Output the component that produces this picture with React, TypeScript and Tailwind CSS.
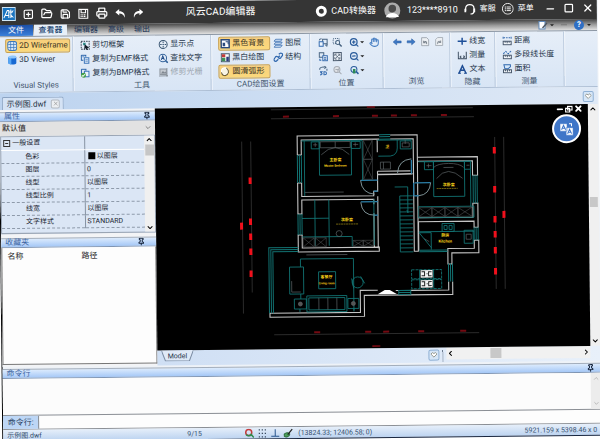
import React from 'react';
import {
  ChevronDown,
  ChevronLeft,
  ChevronRight,
  ChevronUp,
  FolderOpen,
  Hand,
  Minus,
  Pin,
  Printer,
  Save,
  Square,
  SquarePlus,
  X,
  ZoomIn,
  ZoomOut,
} from 'lucide-react';

type IconProps = { children: React.ReactNode; className?: string };

const Icon: React.FC<IconProps> = ({ children, className = 'w-[10px] h-[10px]' }) => (
  <svg viewBox="0 0 20 20" fill="none" strokeWidth="2" className={`${className} shrink-0`} aria-hidden="true">
    {children}
  </svg>
);

const blue = '#2560a8';

const icons = {
  wireframe: (
    <Icon>
      <rect x="1" y="1" width="18" height="18" rx="5" fill="#dbe9f7" stroke="#3b78bd" />
      <path d="M7 2v16M13 2v16M2 7h16M2 13h16" stroke="#3b78bd" strokeWidth="1.5" />
    </Icon>
  ),
  viewer: (
    <Icon>
      <path d="M2 4v12c0 4 16 4 16 0V4z" fill="#1769d2" />
      <path d="M2 4v12c0 2 3 3 6 3V4z" fill="#55a5f4" />
      <ellipse cx="10" cy="4" rx="8" ry="3" fill="#8ec6fb" />
    </Icon>
  ),
  cutFrame: (
    <Icon>
      <rect x="2" y="2" width="16" height="16" stroke="#23303c" strokeDasharray="3 2" />
      <path d="M6 5h5v5H6z" fill="#2b8a86" />
      <path d="M9 8l9 7-4 1 2 4-3-1-2-3-3 2z" fill="#111c26" />
    </Icon>
  ),
  copyEmf: (
    <Icon>
      <path d="M2 2h9v3M2 2v10h4" stroke={blue} />
      <path d="M8 7h9v11H8z" fill="#e9f2fc" stroke="#3c75b9" />
      <path d="M10 11h5M10 14h5M4 5h4" stroke="#3c75b9" strokeWidth="1.5" />
    </Icon>
  ),
  copyBmp: (
    <Icon>
      <path d="M2 2h9v3M2 2v10h4" stroke={blue} />
      <path d="M8 6h9v11H8z" fill="#e9f2fc" stroke="#3c75b9" />
      <circle cx="6" cy="14" r="5" fill="#43a047" />
      <path d="M3 14l2 2 4-4" stroke="#fff" />
    </Icon>
  ),
  showPoint: (
    <Icon>
      <circle cx="10" cy="10" r="8" stroke="#36536f" />
      <path d="M10 4v3M10 13v3M4 10h3M13 10h3" stroke="#36536f" />
      <circle cx="10" cy="10" r="1.5" fill="#36536f" />
    </Icon>
  ),
  findText: (
    <Icon>
      <circle cx="9" cy="9" r="7.5" stroke="#36659c" />
      <path d="M14 14l5 5" stroke="#36659c" strokeWidth="3" />
      <path d="M6 13l3-8 3 8M7 10h4" stroke="#1d4a86" />
    </Icon>
  ),
  trimRaster: (
    <Icon>
      <rect x="3" y="3" width="13" height="11" fill="#c3c9d0" stroke="#8e969f" />
      <path d="M5 12l4-5 3 3 2-2 2 4z" fill="#7f8790" />
      <path d="M1 17h18M17 1v18" stroke="#8e969f" />
    </Icon>
  ),
  blackBg: (
    <Icon>
      <rect x="2" y="2" width="16" height="16" fill="#fff" stroke="#2a4a7d" strokeWidth="3" />
      <path d="M5 15V8h5v7z" fill="#2a4a7d" />
      <path d="M11 6h5v5" stroke="#2a4a7d" />
    </Icon>
  ),
  monochrome: (
    <Icon>
      <rect x="2" y="2" width="16" height="16" fill="#fff" stroke="#45576c" />
      <path d="M3 3h7v6H3z" fill="#c23a3a" />
      <path d="M3 10h7v7H3z" fill="#3f8f58" />
      <path d="M12 8h5v9h-5z" fill="#2d3a7c" />
    </Icon>
  ),
  smoothArc: (
    <Icon>
      <circle cx="9" cy="9" r="7" fill="#f8f4e2" stroke="#fff" />
      <path d="M12 2c7 6 5 13-3 16M2 11c1 5 4 7 8 7" stroke="#6c5b31" />
    </Icon>
  ),
  layers: (
    <Icon>
      <path d="M5 2h13l-3 4H2zM5 8h13l-3 4H2zM5 14h13l-3 4H2z" fill="#e4effb" stroke="#2f67ad" strokeWidth="1.6" />
    </Icon>
  ),
  structure: (
    <Icon>
      <path d="M9 11l4-4M11 4l3-2c3-1 6 2 4 5l-3 4c-2 2-4 1-5 0M9 9c-2-1-4-1-5 1l-2 3c-2 3 1 6 4 5l4-4" stroke="#2f67ad" strokeWidth="2.5" />
    </Icon>
  ),
  pageRefresh: (
    <Icon>
      <path d="M9 3h9v9h-9z" fill="#dfeaf7" stroke="#46627f" />
      <path d="M2 8h8v9H2z" fill="#eef5fd" stroke="#2f67ad" />
      <path d="M2 5c1-3 3-3 5-3M14 15l4-1-1 4" stroke="#46627f" />
    </Icon>
  ),
  zoomWindow: (
    <Icon>
      <rect x="2" y="2" width="12" height="10" stroke="#46627f" strokeDasharray="2 2" />
      <circle cx="11" cy="10" r="4" fill="#e7f0fa" stroke="#46627f" />
      <path d="M14 13l5 5" stroke="#46627f" strokeWidth="3" />
    </Icon>
  ),
  copyView: (
    <Icon>
      <path d="M2 2h9v9H2z" fill="#dbe8f6" stroke="#46627f" />
      <path d="M9 8h9v10H9z" fill="#fff" stroke="#2f67ad" />
      <path d="M11 12h5M11 15h5M3 14v3h3" stroke="#2f67ad" />
    </Icon>
  ),
  fitView: (
    <Icon>
      <rect x="2" y="2" width="16" height="16" fill="#f3f8fd" stroke="#46566a" />
      <path d="M5 9V5h4M15 9V5h-4M5 11v4h4M15 11v4h-4M6 6l8 8M14 6l-8 8" stroke="#46566a" strokeWidth="1.5" />
    </Icon>
  ),
  rotate3d: (
    <Icon>
      <path d="M3 8c-2-5 6-6 9-5M12 1l3 2-3 3M17 6v4" stroke="#46627f" />
      <path d="M3 12h4l-2 2c4 1 2 5-2 4M11 12v6h2c4 0 4-6 0-6z" stroke="#2f67ad" />
    </Icon>
  ),
  zoomPrev: (
    <Icon>
      <circle cx="9" cy="8" r="6" fill="#e0e3e7" stroke="#a7adb5" />
      <path d="M13 12l5 5M6 8h6M14 5l-4 7" stroke="#a7adb5" />
    </Icon>
  ),
  zoomGreen: (
    <Icon>
      <circle cx="9" cy="8" r="6" fill="#dbe9f9" stroke="#2b5d9c" />
      <path d="M13 12l5 5" stroke="#2b5d9c" strokeWidth="3" />
      <path d="M7 7h5v9H7z" fill="#2c8a54" />
    </Icon>
  ),
  arrowLeft: (
    <Icon>
      <path d="M9 4l-7 6 7 6v-4h9V8H9z" fill="#3f7ac5" stroke="#24579c" strokeWidth="1" />
    </Icon>
  ),
  arrowRight: (
    <Icon>
      <path d="M11 4l7 6-7 6v-4H2V8h9z" fill="#3f7ac5" stroke="#24579c" strokeWidth="1" />
    </Icon>
  ),
  pageUndo: (
    <Icon>
      <path d="M3 2h10l4 4v12H3z" fill="#edf0f3" stroke="#8e969f" strokeWidth="1.5" />
      <path d="M7 8v4h4M7 12c2-4 7-3 6 3" stroke="#7b848e" />
    </Icon>
  ),
  pageRedo: (
    <Icon>
      <path d="M7 2h10v16H3V6z" fill="#edf0f3" stroke="#9aa1a9" strokeWidth="1.5" />
      <path d="M13 8v4H9M13 12c-2-4-7-3-6 3" stroke="#8b939c" />
    </Icon>
  ),
  lineWeight: (
    <Icon>
      <path d="M1 10h18" stroke="#1f5099" strokeWidth="3" />
      <path d="M10 3v14" stroke="#1f5099" strokeWidth="3" />
    </Icon>
  ),
  measure: (
    <Icon>
      <path d="M2 3v14h16V3M5 13l3-2M5 13l3 2M15 13l-3-2M15 13l-3 2" stroke="#3a4a5c" />
    </Icon>
  ),
  textA: (
    <Icon>
      <path d="M3 18L10 3l7 15M6 12h8" stroke="#1f4d94" strokeWidth="3" />
      <path d="M1 18h6M13 18h6" stroke="#1f4d94" />
    </Icon>
  ),
  distance: (
    <Icon>
      <path d="M3 4h14" stroke="#2f67ad" strokeDasharray="3 2" />
      <path d="M2 2v4M18 2v4" stroke="#2f67ad" />
      <path d="M2 11h16v7H2z" fill="#f2f6fa" stroke="#46566a" />
      <path d="M6 11v3M10 11v4M14 11v3" stroke="#46566a" />
    </Icon>
  ),
  polyLength: (
    <Icon>
      <path d="M2 8l5-5 5 5 6-6" stroke="#2f67ad" strokeDasharray="4 2" />
      <path d="M2 11h16v7H2z" fill="#f2f6fa" stroke="#46566a" />
      <path d="M6 11v3M10 11v4M14 11v3" stroke="#46566a" />
    </Icon>
  ),
  area: (
    <Icon>
      <path d="M3 2h13v4l-5 4H5z" fill="#d6e8fa" stroke="#2f67ad" />
      <path d="M2 12h16v6H2z" fill="#f2f6fa" stroke="#46566a" />
      <path d="M6 12v3M10 12v4M14 12v3" stroke="#46566a" />
    </Icon>
  ),
};

interface RibbonButtonProps {
  icon: React.ReactNode;
  label: string;
  active?: boolean;
  disabled?: boolean;
}

const RibbonButton: React.FC<RibbonButtonProps> = ({ icon, label, active, disabled }) => (
  <button
    disabled={disabled}
    aria-pressed={active}
    className={`flex h-[14px] items-center gap-[2px] rounded-[2px] border px-px whitespace-nowrap text-[8px] leading-[12px] ${
      active
        ? 'border-[#c9a04c] bg-linear-to-b from-[#f8cf7c] to-[#fbd97c] text-[#3b3425]'
        : disabled
          ? 'border-transparent text-[#9aa3ad]'
          : 'border-transparent text-[#26364a]'
    }`}
  >
    {icon}
    <span>{label}</span>
  </button>
);

const SmallButton: React.FC<{ label: string; caret?: boolean; children: React.ReactNode }> = ({ label, caret, children }) => (
  <button aria-label={label} className="flex h-[14px] items-center">
    {children}
    {caret && <span className="ml-px border-x-2 border-t-2 border-x-transparent border-t-[#222]" />}
  </button>
);

const RibbonGroup: React.FC<{ title: string; className: string; children: React.ReactNode }> = ({ title, className, children }) => (
  <section className={`flex shrink-0 flex-col border-r border-[#bccbde] pt-[2px] shadow-[1px_0_0_#f4f8fd] ${className}`}>
    <div className="flex flex-1 items-start">{children}</div>
    <h2 className="text-center text-[8px] leading-[12px] text-[#43566e]">{title}</h2>
  </section>
);

const TitleBar: React.FC = () => (
  <header className="flex h-[22px] shrink-0 items-center bg-[#353535] pl-[3px] text-white">
    <svg viewBox="0 0 28 28" className="h-[14px] w-[14px] shrink-0" aria-label="logo">
      <rect x="1" y="1" width="26" height="26" fill="#1b74bf" stroke="#cfe6f7" strokeWidth="2" />
      <path d="M4 22l7-15h3v15M7 17h7M18 5v17M14 10h8M18 12l5-5M18 16l5 5" stroke="#fff" strokeWidth="2" fill="none" />
    </svg>
    <div className="ml-[7px] flex gap-[7px]">
      <button aria-label="新建"><SquarePlus className="h-[11px] w-[11px]" strokeWidth={2.5} /></button>
      <button aria-label="打开"><FolderOpen className="h-[12px] w-[12px]" strokeWidth={2.5} /></button>
      <button aria-label="保存"><Save className="h-[11px] w-[11px]" strokeWidth={2.5} /></button>
      <button aria-label="另存为">
        <Icon className="h-[11px] w-[11px]">
          <path d="M2 2h16v16H2zM6 2v6h8V2" stroke="#fff" />
          <path d="M5 12h10M5 15h10" stroke="#fff" strokeDasharray="2 1" />
        </Icon>
      </button>
      <button aria-label="打印"><Printer className="h-[12px] w-[12px]" strokeWidth={2.5} /></button>
      <button aria-label="撤销">
        <Icon className="h-[11px] w-[11px]"><path d="M8 2L1 8l7 6v-4c5 0 8 2 10 8 1-8-3-12-10-12z" fill="#fff" /></Icon>
      </button>
      <button aria-label="重做">
        <Icon className="h-[11px] w-[11px]"><path d="M12 2l7 6-7 6v-4c-5 0-8 2-10 8-1-8 3-12 10-12z" fill="#fff" /></Icon>
      </button>
    </div>
    <h1 className="ml-[42px] shrink-0 text-[10px] leading-[14px] whitespace-nowrap">风云CAD编辑器</h1>
    <nav className="ml-auto flex items-center text-[9px] leading-[12px] whitespace-nowrap">
      <button className="flex items-center gap-1">
        <span className="h-[11px] w-[11px] rounded-full border-[3px] border-white" />
        CAD转换器
      </button>
      <button className="ml-2 flex items-center gap-[6px]">
        <svg viewBox="0 0 18 18" className="h-[17px] w-[17px]" aria-hidden="true">
          <circle cx="9" cy="9" r="8.5" fill="#aaa" />
          <circle cx="9" cy="7" r="4" fill="#4a4a4a" />
          <path d="M2 16c2-6 12-6 14 0" fill="#fff" />
        </svg>
        123****8910
      </button>
      <button className="ml-[6px] flex items-center gap-1 text-[8px]">
        <Icon className="h-[12px] w-[12px]">
          <path d="M3 13V9c0-9 14-9 14 0v4M17 13c0 4-3 5-6 5" stroke="#fff" />
          <path d="M1 9h3v6H1zM16 9h3v6h-3z" fill="#fff" />
        </Icon>
        客服
      </button>
      <button className="ml-[6px] flex items-center gap-1 text-[8px]">
        <Icon className="h-[12px] w-[12px]">
          <circle cx="10" cy="10" r="9" stroke="#fff" strokeWidth="1.5" />
          <path d="M5 7h2M8 7h7M5 10h2M8 10h7M5 13h2M8 13h7" stroke="#fff" strokeWidth="1.5" />
        </Icon>
        菜单
      </button>
    </nav>
    <div className="mr-[3px] ml-[11px] flex items-center gap-2">
      <button aria-label="最小化"><Minus className="h-[11px] w-[11px]" strokeWidth={3} /></button>
      <button aria-label="最大化"><Square className="h-[10px] w-[10px]" strokeWidth={3} /></button>
      <button aria-label="关闭"><X className="h-[12px] w-[12px]" strokeWidth={2.5} /></button>
    </div>
  </header>
);

const MenuTabs: React.FC = () => (
  <div className="flex h-[11px] shrink-0 items-stretch bg-linear-to-b from-[#454545] via-[#9a9a9a] to-[#e0e0e0] text-[8px] leading-[11px] text-[#1f3556]">
    <button className="w-[34px] bg-linear-to-b from-[#1b4fa8] to-[#3b80da] text-white">文件</button>
    <button className="ml-px w-[33px] bg-[#e8f0f9] font-medium text-[#23456f]">查看器</button>
    <button className="ml-[7px]">编辑器</button>
    <button className="ml-[10px]">高级</button>
    <button className="ml-[10px]">输出</button>
    <div className="mr-[6px] ml-auto flex items-center gap-[3px]">
      <button aria-label="样式" className="flex items-center gap-[2px]">
        <Icon>
          <path d="M2 2h12v15H2z" fill="#fff" stroke="#5f89ba" />
          <path d="M8 14l9-10 2 2-9 10z" fill="#4c5560" />
        </Icon>
        <span className="border-x-2 border-t-2 border-x-transparent border-t-[#222]" />
      </button>
      <span className="mx-1 h-px w-[6px] bg-[#777]" />
      <button aria-label="帮助" className="flex items-center gap-[3px]">
        <span className="h-[10px] w-[10px] rounded-full bg-[#2f6fc4] text-center text-[8px] leading-[10px] font-bold text-white">?</span>
        <span className="border-x-2 border-t-2 border-x-transparent border-t-[#222]" />
      </button>
    </div>
  </div>
);

const Ribbon: React.FC = () => (
  <div className="flex h-[57px] shrink-0 overflow-hidden border-y border-t-[#8d98a5] border-b-[#aebfd5] bg-linear-to-b from-[#e6eef8] to-[#d8e5f5]">
    <RibbonGroup title="Visual Styles" className="w-[74px]">
      <div className="ml-[6px] flex w-[65px] flex-col">
        <RibbonButton icon={icons.wireframe} label="2D Wireframe" active />
        <RibbonButton icon={icons.viewer} label="3D Viewer" />
      </div>
    </RibbonGroup>
    <RibbonGroup title="工具" className="w-[138px]">
      <div className="ml-[5px] flex w-[78px] flex-col">
        <RibbonButton icon={icons.cutFrame} label="剪切框架" />
        <RibbonButton icon={icons.copyEmf} label="复制为EMF格式" />
        <RibbonButton icon={icons.copyBmp} label="复制为BMP格式" />
      </div>
      <div className="flex flex-col">
        <RibbonButton icon={icons.showPoint} label="显示点" />
        <RibbonButton icon={icons.findText} label="查找文字" />
        <RibbonButton icon={icons.trimRaster} label="修剪光栅" disabled />
      </div>
    </RibbonGroup>
    <RibbonGroup title="CAD绘图设置" className="w-[99px]">
      <div className="ml-[7px] flex w-[52px] flex-col">
        <RibbonButton icon={icons.blackBg} label="黑色背景" active />
        <RibbonButton icon={icons.monochrome} label="黑白绘图" />
        <RibbonButton icon={icons.smoothArc} label="圆滑弧形" active />
      </div>
      <div className="ml-px flex flex-col">
        <RibbonButton icon={icons.layers} label="图层" />
        <RibbonButton icon={icons.structure} label="结构" />
      </div>
    </RibbonGroup>
    <RibbonGroup title="位置" className="w-[73px]">
      <div className="ml-2 grid grid-cols-[14px_17px_20px_10px]">
        <SmallButton label="刷新">{icons.pageRefresh}</SmallButton>
        <SmallButton label="窗口缩放">{icons.zoomWindow}</SmallButton>
        <SmallButton label="放大" caret><ZoomIn className="h-[10px] w-[10px] text-[#2b5d9c]" strokeWidth={3} /></SmallButton>
        <SmallButton label="平移"><Hand className="h-[10px] w-[10px] text-[#4a80c4]" strokeWidth={2.5} /></SmallButton>
        <SmallButton label="复制视图">{icons.copyView}</SmallButton>
        <SmallButton label="适合窗口">{icons.fitView}</SmallButton>
        <SmallButton label="缩小" caret><ZoomOut className="h-[10px] w-[10px] text-[#2b5d9c]" strokeWidth={3} /></SmallButton>
        <span />
        <SmallButton label="三维旋转">{icons.rotate3d}</SmallButton>
        <SmallButton label="上一个">{icons.zoomPrev}</SmallButton>
        <SmallButton label="选择缩放" caret>{icons.zoomGreen}</SmallButton>
      </div>
    </RibbonGroup>
    <RibbonGroup title="浏览" className="w-[67px]">
      <div className="ml-[9px] flex gap-1">
        <SmallButton label="后退">{icons.arrowLeft}</SmallButton>
        <SmallButton label="前进">{icons.arrowRight}</SmallButton>
        <SmallButton label="撤销视图">{icons.pageUndo}</SmallButton>
        <SmallButton label="重做视图">{icons.pageRedo}</SmallButton>
      </div>
    </RibbonGroup>
    <RibbonGroup title="隐藏" className="w-[45px]">
      <div className="ml-[5px] flex flex-col">
        <RibbonButton icon={icons.lineWeight} label="线宽" />
        <RibbonButton icon={icons.measure} label="测量" />
        <RibbonButton icon={icons.textA} label="文本" />
      </div>
    </RibbonGroup>
    <RibbonGroup title="测量" className="w-[69px]">
      <div className="ml-[5px] flex flex-col">
        <RibbonButton icon={icons.distance} label="距离" />
        <RibbonButton icon={icons.polyLength} label="多段线长度" />
        <RibbonButton icon={icons.area} label="面积" />
      </div>
    </RibbonGroup>
  </div>
);

const properties = [
  { name: '色彩', value: '以图层', swatch: true },
  { name: '图层', value: '0' },
  { name: '线型', value: '以图层' },
  { name: '线型比例', value: '1' },
  { name: '线宽', value: '以图层' },
  { name: '文字样式', value: 'STANDARD' },
];

const PanelHeader: React.FC<{ title: string; className?: string }> = ({ title, className = 'pr-1' }) => (
  <div className={`flex h-[10px] shrink-0 items-center justify-between border-y border-t-[#a3aebc] border-b-[#7f95b3] bg-linear-to-b from-[#dcebfd] to-[#a4c7f6] pl-1 ${className}`}>
    <h2 className="text-[8px] leading-[8px] text-[#3a62a0]">{title}</h2>
    <button aria-label={`固定${title}`}>
      <Pin className="h-[8px] w-[8px] text-[#15233a]" strokeWidth={3} />
    </button>
  </div>
);

const SidePanel: React.FC = () => (
  <aside className="flex w-[155px] shrink-0 flex-col bg-[#f3f4f6] pt-[2px]">
    <PanelHeader title="属性" />
    <div className="relative flex h-[14px] shrink-0 items-center bg-[#e2e2e2]">
      <select aria-label="属性" className="h-full w-full appearance-none bg-transparent pl-[2px] text-[8px] leading-[12px] text-[#1c1c1c]">
        <option>默认值</option>
      </select>
      <ChevronDown className="pointer-events-none absolute right-[3px] h-[8px] w-[8px] text-[#555]" />
    </div>
    <div className="flex h-[98px] shrink-0 border border-[#9aa5b4] bg-[#dbe6f5]">
      <table className="h-[91px] flex-1 border-collapse text-[7px] leading-[12px] text-[#1c2733]">
        <tbody>
          <tr className="h-[13px]">
            <th className="w-[83px] border-r border-b border-r-[#8793a3] border-b-white p-0 pl-[2px] text-left font-normal">
              <span className="flex items-center gap-[2px]">
                <span className="flex h-[7px] w-[7px] items-center border border-[#333] px-px"><span className="h-px w-full bg-[#333]" /></span>
                一般设置
              </span>
            </th>
            <td className="border-b border-white p-0" />
          </tr>
          {properties.map((item) => (
            <tr key={item.name} className="h-[13px] border-b border-dashed border-[#8e9aaa]">
              <th className="border-r border-solid border-r-[#8793a3] p-0 pl-6 text-left font-normal">{item.name}</th>
              <td className="p-0 pl-[2px]">
                <span className="flex items-center gap-[2px]">
                  {item.swatch && <span className="ml-px h-[7px] w-[7px] bg-black" />}
                  {item.value}
                </span>
              </td>
            </tr>
          ))}
        </tbody>
      </table>
      <div className="flex w-[10px] flex-col items-center bg-[#f0f0f0]">
        <ChevronUp className="h-[8px] w-[8px]" strokeWidth={3} />
        <span className="mt-px h-[11px] w-[9px] bg-[#c6c6c6]" />
        <ChevronDown className="mt-auto h-[8px] w-[8px]" strokeWidth={3} />
      </div>
    </div>
    <div className="h-[4px] shrink-0" />
    <PanelHeader title="收藏夹" className="pr-[11px]" />
    <div className="mb-[2px] min-h-0 flex-1 border border-t-0 border-[#777] bg-[#fdfdfd] pt-[2px]">
      <table className="w-full text-[8px] leading-[14px] text-[#222]">
        <thead>
          <tr>
            <th className="w-[79px] p-0 pl-[5px] text-left font-normal">名称</th>
            <th className="p-0 text-left font-normal">路径</th>
          </tr>
        </thead>
      </table>
    </div>
  </aside>
);

const TEAL = '#127272';

// dimension marks along the four sides of the plan
const topMarks = [287, 337, 376, 395, 415, 445];
const bottomMarks = [316, 367, 385, 420, 462];
const leftMarks = [180, 221, 236, 251, 273];
const rightMarks = [152, 191, 221, 236, 252, 273];

const Crossed: React.FC<{ x: number; y: number; w: number; h: number }> = ({ x, y, w, h }) => (
  <path d={`M${x} ${y}h${w}v${h}h${-w}zl${w} ${h}m0 ${-h}l${-w} ${h}`} stroke="#4b4f50" strokeWidth="0.6" />
);

const FloorPlan: React.FC = () => (
  <svg viewBox="156 107 433 242" fill="none" className="h-full w-full" role="img" aria-label="户型图">
    <g stroke="#3d3d3d" strokeWidth="0.7">
      <path d="M272 109.5H474M272 118.5H475M273 334.5H478M242.5 141V313M251.5 141V292M495.5 139V291M504.5 139V291" />
    </g>
    <g fill="#b0101c">
      {topMarks.map((x) => <path key={x} d={`M${x - 3} 115.5h6v2h-6z`} opacity="0.65" />)}
      {bottomMarks.map((x) => <path key={x} d={`M${x - 3} 331.5h6v2h-6z`} opacity="0.65" />)}
      <path d="M368 106.8h8v1.7h-8zM371 346h8v1.7h-8z" opacity="0.65" />
    </g>
    <g fill="#f0101c">
      {leftMarks.map((y) => <path key={y} d={`M249 ${y - 3}h3v6.5h-3z`} />)}
      {rightMarks.map((y) => <path key={y} d={`M493.5 ${y - 3}h3v6.5h-3z`} />)}
      <path d="M240 222h3v7h-3zM502.5 213h3v7h-3z" />
    </g>

    {/* walls */}
    <g stroke="#c4c4c4" strokeWidth="1.1">
      <path d="M298 155V136H380M391 136H418V252.5H414V140H391M380 140H302V155M298 155h4M298 183h4v13.5H374V192h4v-16.5h35M298 183v31h4v-14H374v5M378 140v13M378 172v3h35M378 172h33" />
      <path d="M298 235v17H379v-4H302v-13zM378 197v52M374 214v34" />
      <path d="M418 158.5H478V177h-5V162.5H418M418 219H473v-14h5v24h-4v-6H418.5V252M478 242h-4v8H447.5V265.5h4V254.5H478.5V242zM448 283v8.5H410M452 283v13H363.5v21H269v-4H359.5v-22H377M395 291.5H398" />
    </g>
    <path d="M377 295l7-4h5l7 4z" fill="#fff" />

    {/* windows and doors */}
    <g stroke={TEAL}>
      <path d="M298 155v28M300 155v28M302 155v28M298 214v21M300 214v21M302 214v21M380 135.5h11M380 137.5h11M380 140h11" />
      <path d="M473.5 177v28M475.5 177v28M477.5 177v28M474 229v13M476 229v13M478 229v13M448 265v18M450 265v18M452 265v18" />
      <path d="M298 247.5H268.5V313M298 249.5H270.5V313M298 251.5H272.5V313M419 251.5H447M419 253H447M398 291.5h12v4h-12zM398 293.5h12" />
    </g>
    <g stroke="#2b7fa8" strokeWidth="1.3">
      <path d="M361 181h17M374 192h4M361 202.5h17M374 216h4M412 161v14M415 184h16M414 197h5M414 184v13" />
    </g>
    <g stroke="#8aa0a4" strokeWidth="0.9">
      <path d="M361 181q1 13 14 14M361 203q1 13 14 13M398 174q1-13 14-14M431 184q-1 12-12 13" />
    </g>

    {/* stairs */}
    <path
      d="M400 197v56M400 197h13M400 201h13M400 205h13M400 209h13M400 213h13M400 217h13M400 221h13M400 225h13M400 229h13M400 233h13M400 237h13M400 241h13M400 245h13M400 249h13M400 253h13M395 188h13v26l-1-3"
      stroke={TEAL}
      strokeWidth="0.9"
    />

    {/* furniture */}
    <g stroke={TEAL} strokeWidth="0.9">
      <path d="M302 141H363V181M305 141V196M320 141v34.5h32V141M312 142h8v7h-8zM352 142h9v7h-9zM378 141H413" />
      <path d="M379 157h12q7-1 7-8v-8M401 142h11v8h-11z" />
      <path d="M434 163v35h31v-35M425 163h9v8h-9zM465 163h6v8h-6zM471 171V208M419 163H472M418.5 208H474V219H418.5z" />
      <path d="M315 200v46M329 200v46M302 218.5H329M302 237H352V247M374 200v46" />
      <path d="M419 233H474M442 225h12v8h-12zM444 227h3v4h-3zM449 227h3v4h-3zM419 234h12v17M419 234l12 15M464 232h9v13h-9z" />
      <path d="M300 259H353V311M300 259v8M289 267h14v27h-14zM300 294v5M318 272h17v17h-17z" />
      <path d="M306 296h40v16h-40zM308 298h36v12h-36zM293.5 299h12v10h-12zM347 299h11v10h-11zM299 309v3M353 309v3" />
      <circle cx="357" cy="283" r="5.5" />
      <path d="M351 279l2 10M360 277l4 7" />
      <path d="M411 271h30v9h-30zM411 281h30v9h-30z" strokeDasharray="3 1" />
      <path d="M419 271v19M433 271v19" />
    </g>
    <g stroke="#5c6466" strokeWidth="0.7">
      <path d="M321 142h30v6h-30zM336 142v6M322 155q14-14 28 0M434 169q4-4 15-4t15 4M437 180q11-14 26 0M381 163h10v7h-10zM384 163v7M403 144h7v4h-7zM406 141v4" />
      <path d="M291 281v11h9M318 298v12M327 298v12M336 298v12M305 192.5H344M306 255H347M444 169h10M314 145h4M316 143v4M354 145h5M356 143v4M427 167h5M429 165v4M467 167h3M424 240l5 3M466 236h5v5h-5z" />
      <circle cx="339" cy="234" r="3" />
      <circle cx="299.5" cy="304" r="2" fill="#555" />
      <circle cx="352.5" cy="304" r="2" fill="#555" />
    </g>
    <Crossed x={364} y={141} w={9} h={19} />
    <Crossed x={364} y={160} w={9} h={20} />
    <Crossed x={303} y={238} w={11} h={9} />
    <Crossed x={315} y={238} w={11} h={9} />
    <Crossed x={353} y={241} w={10} h={6} />
    <Crossed x={363} y={241} w={10} h={6} />
    <Crossed x={419} y={209} w={13} h={9} />
    <Crossed x={432} y={209} w={13} h={9} />
    <Crossed x={445} y={209} w={13} h={9} />
    <Crossed x={458} y={209} w={14} h={9} />
    <g>
      <path d="M420 271.5h12v7.5h-12zM420 281.5h12v7.5h-12z" fill="#f4f4f4" />
      <path d="M421 273h3v4h-3M431 273h-3v4h3M421 283h3v4h-3M431 283h-3v4h3M426 275h1M426 285h1" stroke="#222" strokeWidth="1" />
    </g>

    {/* room names */}
    <g fill="#ffd91a" textAnchor="middle" fontSize="4" fontWeight="700">
      <text x="336" y="161.5">主卧室</text>
      <text x="336" y="167" fontSize="3">Master Bedroom</text>
      <text x="388" y="149">卫</text>
      <text x="347" y="221.5">次卧室</text>
      <text x="449" y="187.5">次卧室</text>
      <text x="445" y="238">厨房</text>
      <text x="445" y="244" fontSize="4">Kitchen</text>
      <text x="326" y="278.5">客餐厅</text>
      <text x="326" y="284.5" fontSize="3">Living room</text>
    </g>
    <path d="M336 224.5h22M437 190h21" stroke="#8c7a14" strokeWidth="0.8" strokeDasharray="2 0.5" />
  </svg>
);

const Canvas: React.FC = () => (
  <div className="relative min-w-0 flex-1 bg-black">
    <FloorPlan />
    <div className="absolute top-0 right-[5px] flex items-center gap-px text-white">
      <button aria-label="最小化图纸"><Minus className="h-[8px] w-[8px]" strokeWidth={5} /></button>
      <button aria-label="还原图纸">
        <Icon className="h-[8px] w-[8px]"><path d="M7 3h11v9H7zM2 8h10v9H2z" stroke="#fff" strokeWidth="3" fill="#000" /></Icon>
      </button>
      <button aria-label="关闭图纸"><X className="h-[9px] w-[9px]" strokeWidth={5} /></button>
    </div>
    <button
      aria-label="翻译"
      className="absolute top-[10px] right-[7px] flex h-[29px] w-[29px] items-center justify-center rounded-full border-2 border-white bg-[#3f76c8]"
    >
      <svg viewBox="0 0 30 28" fill="none" className="h-[14px] w-[15px]" aria-hidden="true">
        <path d="M2 3h14v15H2zM14 11h14v15H14z" fill="#fff" stroke="#3f76c8" />
        <path d="M5 15l4-9 4 9M7 12h4M17 23l4-9 4 9M19 20h4M18 5h7v4" stroke="#3f76c8" strokeWidth="2" />
        <path d="M20 3h5v5" stroke="#fff" strokeWidth="2" />
      </svg>
    </button>
  </div>
);

const HeartButton: React.FC<{ label: string }> = ({ label }) => (
  <button aria-label={label} className="flex h-[11px] w-[11px] shrink-0 items-center justify-center rounded-[2px] border border-[#8fb0d4] bg-[#d6e6f7]">
    <svg viewBox="0 0 14 14" className="h-[7px] w-[7px]" fill="#fff" stroke="#7d7f72" strokeWidth="1.5" aria-hidden="true">
      <path d="M1 5l3-3 3 2 3-2 3 3-6 6z" />
    </svg>
  </button>
);

const Workspace: React.FC = () => (
  <div className="flex min-w-0 flex-1 flex-col">
    <div className="flex min-h-0 flex-1">
      <Canvas />
      <div className="flex w-[10px] shrink-0 flex-col items-center bg-[#f0f0f0] py-px">
        <ChevronUp className="h-[8px] w-[8px]" strokeWidth={3} />
        <span className="mt-[84px] h-[10px] w-[8px] bg-[#c8c8c8]" />
        <ChevronDown className="mt-auto h-[8px] w-[8px]" strokeWidth={3} />
      </div>
    </div>
    <div className="flex h-[15px] shrink-0 items-start bg-linear-to-r from-[#cfdff4] to-[#e8f0fa]">
      <button className="relative ml-1 h-[11px] w-[32px] text-[7px] leading-[10px] text-[#26364a]">
        <svg viewBox="0 0 32 11" className="absolute inset-0 h-full w-full" aria-hidden="true">
          <path d="M0 0l4 10.5h24l4-10.5" fill="#dfe9f7" stroke="#7b8ca3" />
        </svg>
        <span className="relative">Model</span>
      </button>
      <div className="ml-auto flex h-full items-center">
        <HeartButton label="布局列表" />
        <span className="mx-[3px] h-[12px] border-l border-dotted border-[#6d7c8f]" />
      </div>
      <div className="flex h-[12px] w-[144px] items-center bg-[#f1f1f1]">
        <ChevronLeft className="h-[8px] w-[8px]" strokeWidth={3} />
        <span className="ml-9 h-[10px] w-[11px] bg-[#c8c8c8]" />
        <ChevronRight className="ml-auto h-[8px] w-[8px]" strokeWidth={3} />
      </div>
      <span className="w-[10px]" />
    </div>
  </div>
);

const CommandArea: React.FC = () => (
  <section className="mt-[2px] shrink-0">
    <PanelHeader title="命令行" className="pr-[6px]" />
    <div className="flex h-[36px] justify-end bg-[#fcfcfc]">
      <div className="flex w-[10px] flex-col items-center justify-between bg-[#ececec] py-[2px] text-[#999]">
        <ChevronUp className="h-[7px] w-[7px]" />
        <ChevronDown className="h-[7px] w-[7px]" />
      </div>
    </div>
    <div className="flex h-[15px] border-y border-[#8b8f95] bg-[#fdfdfd]">
      <label htmlFor="command" className="w-[36px] border-r border-[#8b8f95] bg-[#bdd6f5] text-center text-[8px] leading-[13px] text-[#23395a]">
        命令行:
      </label>
      <input id="command" className="min-w-0 flex-1 px-1 text-[8px] outline-none" />
    </div>
  </section>
);

const StatusBar: React.FC = () => (
  <footer className="flex h-[12px] shrink-0 items-center border-b border-[#1a2740] bg-linear-to-b from-[#e6effa] to-[#bcd3f0] text-[7px] leading-[10px] whitespace-nowrap text-[#35506f]">
    <span className="w-[184px] pl-1">示例图.dwf</span>
    <span className="w-[57px]">9/15</span>
    <div className="flex items-center gap-[3px]">
      <button aria-label="对象捕捉">
        <Icon>
          <circle cx="9" cy="8" r="6" stroke="#c33c3c" strokeWidth="3" />
          <path d="M4 12c3 4 8 3 10 0l5 6" stroke="#2f8a4e" strokeWidth="3" />
        </Icon>
      </button>
      <button aria-label="栅格">
        <Icon><path d="M3 3h16M3 10h16M3 17h16" stroke="#3b4c61" strokeWidth="2.5" strokeDasharray="2.5 3.5" /></Icon>
      </button>
      <button aria-label="正交">
        <Icon><path d="M10 2v14M2 16h16" stroke="#27548c" /></Icon>
      </button>
      <button aria-label="刷选">
        <Icon>
          <path d="M2 12c4-4 9-3 11 0-1 6-8 7-11 4z" fill="#4a9d5b" stroke="#2c6d3c" />
          <path d="M9 13l9-11" stroke="#222" strokeWidth="2.5" />
        </Icon>
      </button>
    </div>
    <span className="ml-[5px]">(13824.33; 12406.58; 0)</span>
    <span className="mr-1 ml-auto">5921.159 x 5398.46 x 0</span>
  </footer>
);

const App: React.FC = () => {
  return (
    <div className="h-screen overflow-hidden bg-white">
      <div className="flex h-full -rotate-[0.6deg] flex-col border-l border-black bg-[#eef2f7] pr-px font-['Roboto','Noto_Sans_CJK_SC',sans-serif]">
        <TitleBar />
        <MenuTabs />
        <Ribbon />
        <div className="flex h-[17px] shrink-0 items-end justify-between bg-linear-to-r from-[#bcd3ef] to-[#dfe9f6] pl-[2px]">
          <div className="flex h-[13px] items-center gap-[5px] rounded-t-[2px] border border-b-0 border-[#8ba3c2] bg-[#d5e3f5] pr-[3px] pl-1">
            <button className="text-[8px] leading-[11px] text-[#23303f]">示例图.dwf</button>
            <button aria-label="关闭示例图" className="flex h-[9px] w-[9px] items-center justify-center rounded-[2px] border border-[#b3b9c0] bg-[#eceff2]">
              <X className="h-[6px] w-[6px] text-[#999]" strokeWidth={3} />
            </button>
          </div>
          <div className="mr-1 mb-[2px]">
            <HeartButton label="图纸列表" />
          </div>
        </div>
        <main className="flex min-h-0 flex-1">
          <SidePanel />
          <Workspace />
        </main>
        <CommandArea />
        <StatusBar />
      </div>
    </div>
  );
};

export default App;
